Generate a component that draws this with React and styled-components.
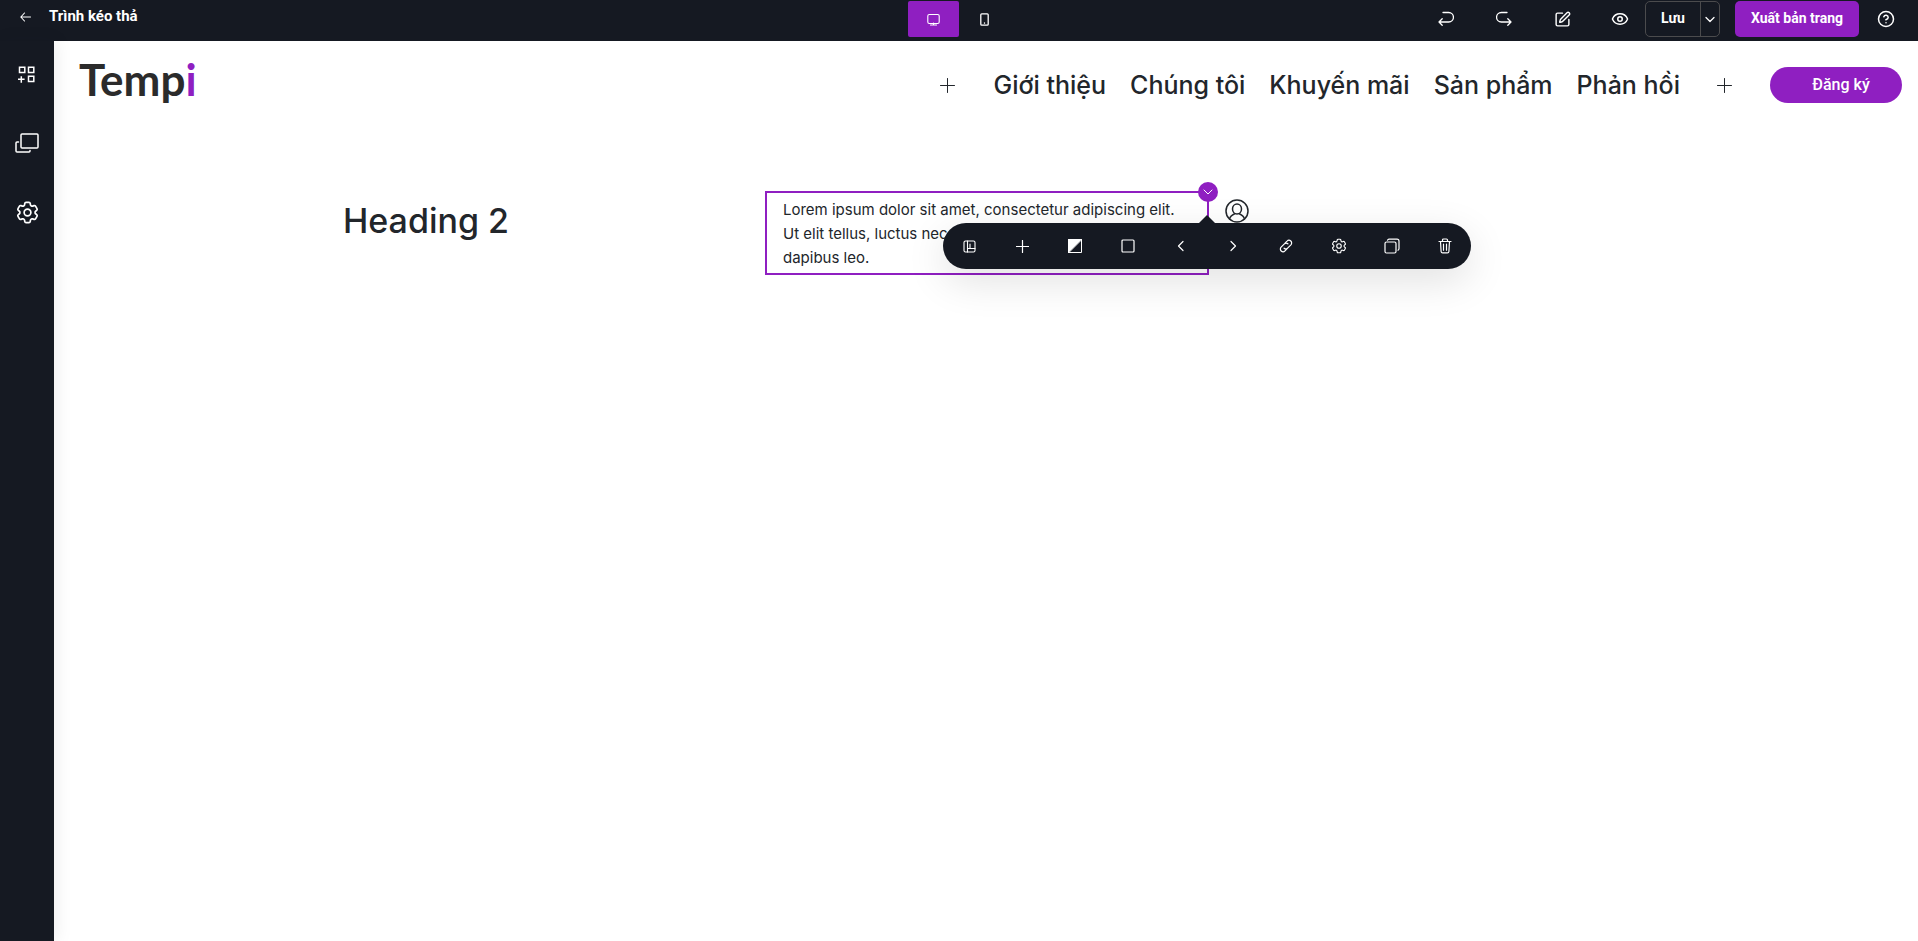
import React from "react";
import styled, { createGlobalStyle, css } from "styled-components";
import { HiOutlineCog6Tooth } from "react-icons/hi2";
import { Eye, CircleHelp, SquarePen } from "lucide-react";

const ink = "#151922";
const purple = "#8f1fc1";
const text = "#22262b";

const GlobalStyle = createGlobalStyle`
  *, *::before, *::after { box-sizing: border-box; }
  body { margin: 0; background: #fff; color: ${text}; font-family: Inter, "Liberation Sans", sans-serif; }
  button { font: inherit; color: inherit; background: none; border: 0; padding: 0; cursor: pointer; }
  a { color: inherit; text-decoration: none; }
  svg { display: block; flex: none; }
  h2, p { margin: 0; }
`;

const Page = styled.div`
  min-height: 100vh;
  display: flex;
  flex-direction: column;
`;

const TopBar = styled.header`
  display: grid;
  grid-template-columns: 1fr auto 1fr;
  height: 41px;
  padding: 1px 18px 4px;
  background: ${ink};
  color: #fff;
  font-family: Roboto, "Liberation Sans", sans-serif;
`;

const TitleGroup = styled.div`
  display: flex;
  align-items: center;
  gap: 16px;
  padding-bottom: 4px;
`;

const Title = styled.strong`
  font-size: 15px;
  font-weight: 700;
  line-height: 20px;
  padding-bottom: 2px;
`;

const Devices = styled.div`
  display: flex;
`;

const DeviceButton = styled.button`
  display: grid;
  place-items: center;
  width: 51px;
  height: 36px;
  border-radius: 2px;
  background: ${(p) => (p.$active ? purple : "transparent")};
`;

const Actions = styled.div`
  display: flex;
  align-items: center;
  justify-content: flex-end;
`;

const IconButton = styled.button`
  display: grid;
  place-items: center;
  width: ${(p) => p.$width || 24}px;
  height: ${(p) => p.$height || 24}px;
`;

const History = styled.div`
  display: flex;
  gap: 34px;
  margin-right: 13px;
`;

const SaveGroup = styled.div`
  display: flex;
  height: 36px;
  width: 75px;
  border: 1px solid #4b4b4d;
  border-radius: 5px;
  margin-right: 15px;
`;

const SaveButton = styled.button`
  width: 55px;
  border-right: 1px solid #4b4b4d;
  font-size: 14px;
  font-weight: 700;
  padding-bottom: 2px;
`;

const SaveMenu = styled.button`
  flex: 1;
  display: grid;
  place-items: center;
`;

const PublishButton = styled.button`
  width: 124px;
  height: 36px;
  border-radius: 5px;
  background: ${purple};
  font-size: 14px;
  font-weight: 700;
  padding-bottom: 2px;
  margin-right: 13px;
`;

const Body = styled.div`
  flex: 1;
  display: flex;
`;

const Sidebar = styled.nav`
  flex: none;
  width: 54px;
  padding-top: 20px;
  display: flex;
  flex-direction: column;
  align-items: center;
  gap: 42px;
  background: ${ink};
  color: #fff;
  box-shadow: 2px 0 18px rgba(21, 25, 34, 0.08);
  z-index: 1;
`;

const Canvas = styled.main`
  flex: 1;
  min-width: 0;
`;

const SiteHeader = styled.header`
  display: flex;
  align-items: center;
  justify-content: space-between;
  height: 88px;
  padding: 0 16px 0 25px;
`;

const Logo = styled.a`
  font-family: Lato, "Liberation Sans", sans-serif;
  font-size: 44px;
  font-weight: 700;
  line-height: 50px;
  color: #2b2b2b;
  padding-bottom: 12px;
  span { color: ${purple}; }
`;

const SiteMenu = styled.nav`
  display: flex;
  align-items: center;
`;

const Links = styled.div`
  display: flex;
  gap: 24px;
  margin: 0 32px 0 33px;
`;

const MenuLink = styled.a`
  font-size: 25px;
  font-weight: 500;
  line-height: 32px;
  white-space: nowrap;
`;

const SignUp = styled.button`
  width: 132px;
  height: 36px;
  border-radius: 18px;
  margin-left: 34px;
  padding-left: 10px;
  background: ${purple};
  color: #fff;
  font: 500 16px/24px Roboto, "Liberation Sans", sans-serif;
`;

const Section = styled.section`
  display: grid;
  grid-template-columns: repeat(3, 1fr);
  max-width: 1322px;
  padding-left: 2px;
  margin: 64px auto 0;
`;

const Column = styled.div`
  position: relative;
  padding: 5px 16px 3px;
  ${(p) => p.$selected && css`outline: 2px solid ${purple};`}
`;

const UserColumn = styled(Column)`
  padding: 6px 18px;
`;

const Heading = styled.h2`
  font-size: 34px;
  font-weight: 500;
  line-height: 46px;
`;

const Copy = styled.p`
  font-size: 15px;
  line-height: 24px;
`;

const ColumnHandle = styled.button`
  position: absolute;
  z-index: 2;
  top: -11px;
  right: -11px;
  width: 20px;
  height: 20px;
  border-radius: 50%;
  display: grid;
  place-items: center;
  background: ${purple};
  color: #fff;
`;

const FloatingBar = styled.div`
  position: absolute;
  z-index: 3;
  top: 30px;
  left: 100%;
  transform: translateX(-50%);
  width: 528px;
  height: 46px;
  display: flex;
  border-radius: 23px;
  background: ${ink};
  color: #fff;
  box-shadow: 0 12px 40px rgba(0, 0, 0, 0.12);
  &::before {
    content: "";
    position: absolute;
    left: 50%;
    top: -8px;
    margin-left: -8px;
    border: solid transparent;
    border-width: 0 8px 8px;
    border-bottom-color: ${ink};
  }
`;

const BarButton = styled.button`
  flex: 1;
  display: grid;
  place-items: center;
`;

const Icon = ({ w = 16, h = w, s = 1.4, children }) => (
  <svg width={w} height={h} viewBox={`0 0 ${w} ${h}`} fill="none" stroke="currentColor" strokeWidth={s} strokeLinecap="round" strokeLinejoin="round" aria-hidden="true">
    {children}
  </svg>
);

const PlusIcon = () => (
  <Icon w={15} s={1}><path d="M7.5 .5v14M.5 7.5h14" /></Icon>
);

const tools = [
  ["Bố cục", <Icon w={13} s={1.1}><rect x="1" y="1" width="11" height="11" rx="1.5" /><path d="M4.5 1v11M4.5 8.5H12M7 4v4.5" /></Icon>],
  ["Thêm", <Icon w={13} s={1.2}><path d="M6.5 .5v12M.5 6.5h12" /></Icon>],
  ["Màu nền", <Icon w={14} s={1}><path d="M.5 .5h13v13H.5z" /><path d="M.5 13.5V.5h13z" fill="currentColor" /></Icon>],
  ["Viền", <Icon w={14} s={1.2}><rect x="1" y="1" width="12" height="12" rx="1" /></Icon>],
  ["Trước", <Icon w={8} h={12} s={1.2}><path d="M6 1.5 1.5 6 6 10.5" /></Icon>],
  ["Sau", <Icon w={8} h={12} s={1.2}><path d="M2 1.5 6.5 6 2 10.5" /></Icon>],
  ["Liên kết", <Icon w={14} s={1.2}><path d="M5.8 4.3 8 2.1a2.6 2.6 0 0 1 3.9 3.7L8.6 9.1a2.6 2.6 0 0 1-3.5.1M8.2 9.7 6 11.9a2.6 2.6 0 0 1-3.9-3.7l3.3-3.3a2.6 2.6 0 0 1 3.5-.1" /></Icon>],
  ["Cài đặt", <HiOutlineCog6Tooth size={18} />],
  ["Nhân bản", <Icon w={16} s={1.2}><rect x="1" y="4" width="11" height="11" rx="1.5" /><path d="M3.5 2.2A2 2 0 0 1 5 1.2H13a2 2 0 0 1 2 2v7.3a2 2 0 0 1-1 1.7" /></Icon>],
  ["Xóa", <Icon w={14} h={16} s={1.2}><path d="M1 3.5h12M4.5 3.5V2a1 1 0 0 1 1-1h3a1 1 0 0 1 1 1v1.5M2.5 3.5l.6 10a1.5 1.5 0 0 0 1.5 1.4h4.8a1.5 1.5 0 0 0 1.5-1.4l.6-10M5.5 6.2v6M8.5 6.2v6" /></Icon>],
];

const menu = ["Giới thiệu", "Chúng tôi", "Khuyến mãi", "Sản phẩm", "Phản hồi"];

export default function App() {
  return (
    <Page>
      <GlobalStyle />
      <TopBar>
        <TitleGroup>
          <IconButton $width={15} aria-label="Quay lại">
            <Icon w={11} h={10} s={1.1}><path d="M10.5 5H.8M4.5 1 .8 5l3.7 4" /></Icon>
          </IconButton>
          <Title>Trình kéo thả</Title>
        </TitleGroup>
        <Devices>
          <DeviceButton $active aria-label="Máy tính">
            <Icon w={13} h={13} s={1.1}><rect x=".8" y="1.5" width="11.4" height="9" rx="1.5" /><path d="M3.5 12h6M6.5 10v2" /></Icon>
          </DeviceButton>
          <DeviceButton aria-label="Điện thoại">
            <Icon w={9} h={13} s={1.3}><rect x=".8" y=".8" width="7.4" height="11.4" rx="1" /><path d="M4.5 9.8v.4" /></Icon>
          </DeviceButton>
        </Devices>
        <Actions>
          <History>
            <IconButton aria-label="Hoàn tác">
              <Icon s={1.3}><path d="M5 1.5h5.7a4.5 4.5 0 0 1 0 9.5H1M4.2 7.8 1 11l3.2 3.2" /></Icon>
            </IconButton>
            <IconButton aria-label="Làm lại">
              <Icon s={1.3}><path d="M11 1.5H5.3a4.5 4.5 0 0 0 0 9.5H15M11.8 7.8 15 11l-3.2 3.2" /></Icon>
            </IconButton>
            <IconButton aria-label="Chỉnh sửa"><SquarePen size={17} strokeWidth={2} /></IconButton>
            <IconButton aria-label="Xem trước"><Eye size={18} strokeWidth={2} /></IconButton>
          </History>
          <SaveGroup>
            <SaveButton>Lưu</SaveButton>
            <SaveMenu aria-label="Tùy chọn lưu">
              <Icon w={10} h={7} s={1.3}><path d="m1 1.5 4 4 4-4" /></Icon>
            </SaveMenu>
          </SaveGroup>
          <PublishButton>Xuất bản trang</PublishButton>
          <IconButton $width={28} aria-label="Trợ giúp"><CircleHelp size={18} strokeWidth={2} /></IconButton>
        </Actions>
      </TopBar>
      <Body>
        <Sidebar>
          <IconButton $width={28} $height={27} aria-label="Thêm phần tử">
            <Icon w={21} h={18} s={1.5}>
              <path d="M2.5 1.2h5.3v5.3H2.5zM11.5 1.2h5.3v5.3h-5.3zM11.5 10.2h5.3v5.3h-5.3zM4.3 10.3v6.4M1 13.3h6.6" strokeLinejoin="miter" strokeLinecap="butt" />
            </Icon>
          </IconButton>
          <IconButton $width={28} $height={27} aria-label="Trang">
            <Icon w={24} h={22} s={1.5}>
              <rect x="6" y="1" width="17" height="14" rx="1" /><path d="M3.500 9H2a1 1 0 0 0-1 1v8a1 1 0 0 0 1 1h12a1 1 0 0 0 1-1v-.5" />
            </Icon>
          </IconButton>
          <IconButton $width={28} $height={27} aria-label="Cài đặt"><HiOutlineCog6Tooth size={27} /></IconButton>
        </Sidebar>
        <Canvas>
          <SiteHeader>
            <Logo href="#">Temp<span>i</span></Logo>
            <SiteMenu>
              <IconButton $width={26} aria-label="Thêm vào trước"><PlusIcon /></IconButton>
              <Links>
                {menu.map((m) => <MenuLink href="#" key={m}>{m}</MenuLink>)}
              </Links>
              <IconButton $width={24} aria-label="Thêm vào sau"><PlusIcon /></IconButton>
              <SignUp>Đăng ký</SignUp>
            </SiteMenu>
          </SiteHeader>
          <Section>
            <Column><Heading>Heading 2</Heading></Column>
            <Column $selected>
              <Copy>Lorem ipsum dolor sit amet, consectetur adipiscing elit. Ut elit tellus, luctus nec ullamcorper mattis, pulvinar dapibus leo.</Copy>
              <ColumnHandle aria-label="Tùy chọn cột">
                <Icon w={10} h={6} s={1}><path d="m1 1 4 4 4-4" /></Icon>
              </ColumnHandle>
              <FloatingBar role="toolbar" aria-label="Công cụ cột">
                {tools.map(([label, icon]) => <BarButton key={label} aria-label={label}>{icon}</BarButton>)}
              </FloatingBar>
            </Column>
            <UserColumn>
              <Icon w={24} s={1.5}>
                <circle cx="12" cy="12" r="11" />
                <ellipse cx="12" cy="10" rx="4.5" ry="5" />
                <path d="M4.5 20c.8-3.2 2.7-4.2 5.2-5.3M19.5 20c-.8-3.2-2.7-4.2-5.2-5.3" />
              </Icon>
            </UserColumn>
          </Section>
        </Canvas>
      </Body>
    </Page>
  );
}
